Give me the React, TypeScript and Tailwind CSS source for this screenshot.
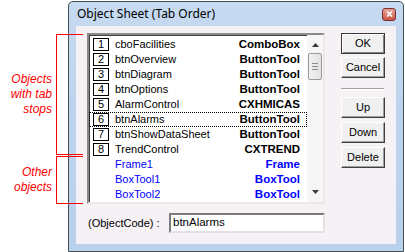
import React from "react";

type Row = { n?: number; name: string; type: string; blue?: boolean; focus?: boolean };

const rows: Row[] = [
  { n: 1, name: "cboFacilities", type: "ComboBox" },
  { n: 2, name: "btnOverview", type: "ButtonTool" },
  { n: 3, name: "btnDiagram", type: "ButtonTool" },
  { n: 4, name: "btnOptions", type: "ButtonTool" },
  { n: 5, name: "AlarmControl", type: "CXHMICAS" },
  { n: 6, name: "btnAlarms", type: "ButtonTool", focus: true },
  { n: 7, name: "btnShowDataSheet", type: "ButtonTool" },
  { n: 8, name: "TrendControl", type: "CXTREND" },
  { name: "Frame1", type: "Frame", blue: true },
  { name: "BoxTool1", type: "BoxTool", blue: true },
  { name: "BoxTool2", type: "BoxTool", blue: true },
];

function Btn({ label, def }: { label: string; def?: boolean }) {
  return (
    <div
      className={
        "h-[21px] w-[44px] flex items-center justify-center bg-[#f0f0f0] text-[11px] text-black border " +
        (def
          ? "border-[#3a3a3a] shadow-[inset_1px_1px_0_#ffffff,inset_-1px_-1px_0_#808080]"
          : "border-t-white border-l-white border-r-[#404040] border-b-[#404040] shadow-[inset_-1px_-1px_0_#a0a0a0]")
      }
    >
      {label}
    </div>
  );
}

export default function App() {
  return (
    <div className="relative w-[405px] h-[252px] bg-white overflow-hidden font-['Liberation_Sans',Arial,sans-serif]">
      {/* Dialog window */}
      <div className="ml-[68px] mt-[1px] w-[336px] h-[251px] border border-[#444c58] rounded-t-[5px] bg-gradient-to-b from-[#c6daf1] via-[#bcd3ee] to-[#bad1ec] flex flex-col px-[7px] pb-[7px]">
        <div className="h-[24px] flex items-center justify-between pl-[1px] pr-[0px]">
          <span className="text-[12px] text-black font-['Noto_Sans',sans-serif] leading-none">Object Sheet (Tab Order)</span>
          <div className="w-[14px] h-[13px] rounded-[3px] border border-[#7a3030] bg-gradient-to-b from-[#e8a396] to-[#c85244] flex items-center justify-center">
            <svg width="7" height="6" viewBox="0 0 7 6">
              <path d="M1 0.5 L6 5.5 M6 0.5 L1 5.5" stroke="white" strokeWidth="1.6" />
            </svg>
          </div>
        </div>
        <div className="flex-1 bg-[#f5f1f5] pl-[11px] pt-[7px] flex flex-col">
          <div className="flex gap-[16px]">
            {/* List */}
            <div className="w-[238px] h-[171px] border-2 border-t-[#8a8a8a] border-l-[#8a8a8a] border-b-[#ebe7eb] border-r-[#ebe7eb] bg-white flex shadow-[inset_1px_1px_0_#3f3f3f]">
              <div className="w-[218px] pt-[2px] flex flex-col">
                {rows.map((r) => (
                  <div
                    key={r.name}
                    className={
                      "h-[15px] flex items-center pl-[4px] pr-[7px] " +
                      (r.focus ? "outline outline-1 outline-dotted outline-black -outline-offset-1" : "")
                    }
                  >
                    <div className="w-[16px] h-[13px] flex items-center justify-center">
                      {r.n !== undefined && (
                        <div className="w-[16px] h-[13px] border border-black flex items-center justify-center text-[11px] leading-none text-black">
                          {r.n}
                        </div>
                      )}
                    </div>
                    <span className={"ml-[6px] text-[11px] leading-none " + (r.blue ? "text-[#0000ff]" : "text-black")}>
                      {r.name}
                    </span>
                    <span className={"ml-auto text-[11.5px] font-bold leading-none " + (r.blue ? "text-[#0000ff]" : "text-black")}>
                      {r.type}
                    </span>
                  </div>
                ))}
              </div>
              {/* Scrollbar */}
              <div className="w-[16px] bg-[#f6f6f6] flex flex-col items-center">
                <div className="h-[16px] flex items-center justify-center pt-[4px]">
                  <svg width="7" height="4" viewBox="0 0 7 4">
                    <path d="M0 4 L3.5 0 L7 4 Z" fill="#3a3a3a" />
                  </svg>
                </div>
                <div className="mt-[2px] w-[14px] h-[27px] rounded-[2px] border border-[#9a9a9a] bg-gradient-to-r from-[#f2f2f2] to-[#e2e2e2] flex flex-col items-center justify-center gap-[2px]">
                  <div className="w-[6px] h-[1px] bg-[#8a8a8a]" />
                  <div className="w-[6px] h-[1px] bg-[#8a8a8a]" />
                  <div className="w-[6px] h-[1px] bg-[#8a8a8a]" />
                </div>
                <div className="flex-1" />
                <div className="h-[16px] flex items-center justify-center pb-[4px]">
                  <svg width="7" height="4" viewBox="0 0 7 4">
                    <path d="M0 0 L3.5 4 L7 0 Z" fill="#3a3a3a" />
                  </svg>
                </div>
              </div>
            </div>
            {/* Buttons */}
            <div className="flex flex-col">
              <Btn label="OK" def />
              <div className="mt-[3px]">
                <Btn label="Cancel" />
              </div>
              <div className="mt-[10px] w-[43px] h-[2px] border-t border-t-[#a0a0a0] border-b border-b-white" />
              <div className="mt-[7px]">
                <Btn label="Up" />
              </div>
              <div className="mt-[4px]">
                <Btn label="Down" />
              </div>
              <div className="mt-[4px]">
                <Btn label="Delete" />
              </div>
            </div>
          </div>
          <div className="mt-[9px] flex items-center h-[20px]">
            <span className="ml-[1px] text-[11px] text-black w-[81px]">(ObjectCode) :</span>
            <div className="w-[156px] h-[20px] border-2 border-t-[#7a7a7a] border-l-[#7a7a7a] border-b-[#e4e0e4] border-r-[#e4e0e4] bg-white flex items-center pl-[2px] text-[11.5px] text-black">
              btnAlarms
            </div>
          </div>
        </div>
      </div>

      {/* Annotations */}
      <div className="absolute left-[56px] top-[34px] w-[27px] h-[121px] border-l border-t border-b border-[#ff0000]" />
      <div className="absolute left-[56px] top-[156px] w-[27px] h-[48px] border-l border-t border-b border-[#ff0000]" />
      <div className="absolute right-[353px] top-[72px] text-right italic text-[12px] leading-[15px] text-[#ff0000]">
        Objects
        <br />
        with tab
        <br />
        stops
      </div>
      <div className="absolute right-[353px] top-[165px] text-right italic text-[12px] leading-[15px] text-[#ff0000]">
        Other
        <br />
        objects
      </div>
    </div>
  );
}
